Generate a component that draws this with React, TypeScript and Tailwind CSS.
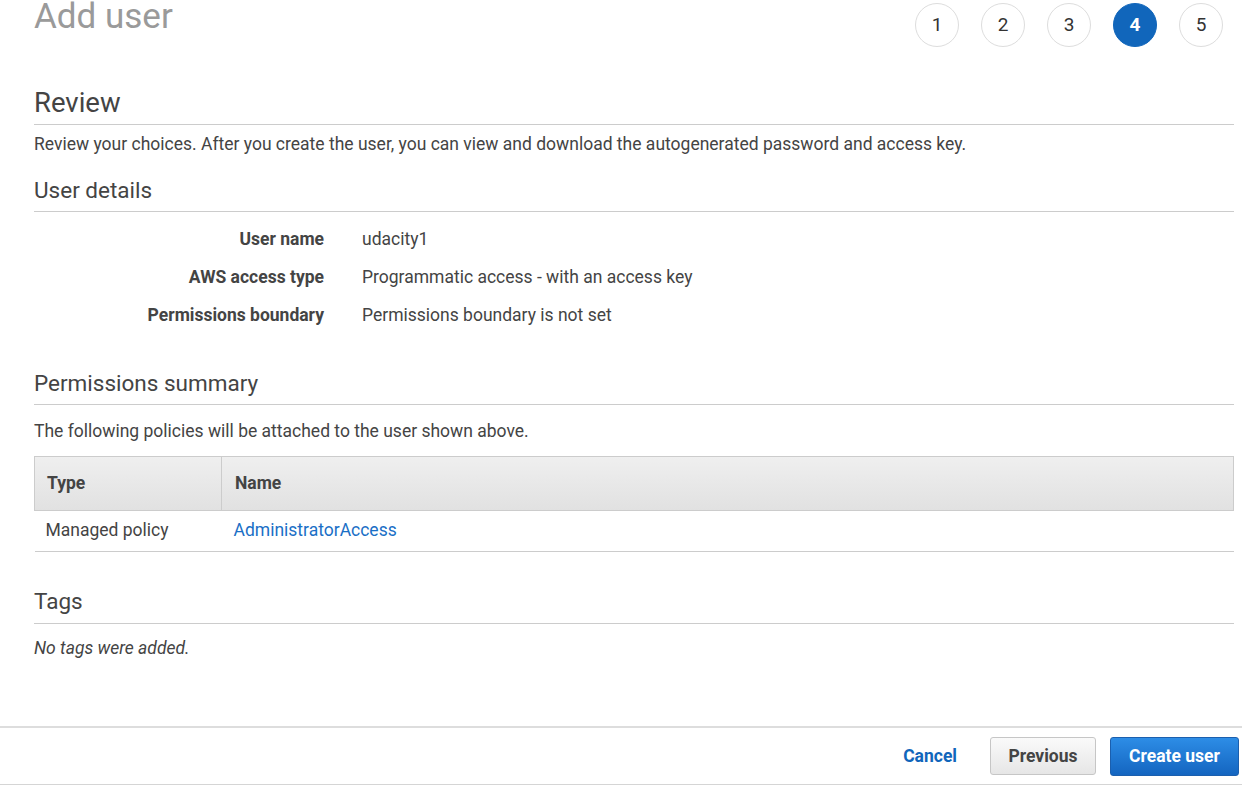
import React from "react";

const steps = [1, 2, 3, 4, 5];

function SectionHeading({ children, mt, pb }: { children: React.ReactNode; mt: string; pb: string }) {
  return (
    <h3 className={`${mt} ${pb} text-[22.5px] leading-[28px] font-normal text-[#444] border-b border-[#cccccc]`}>
      {children}
    </h3>
  );
}

export default function App() {
  return (
    <div
      className="w-[1242px] h-[785px] bg-white overflow-hidden flex flex-col text-[#444]"
      style={{ fontFamily: "Roboto, 'Liberation Sans', Arial, sans-serif" }}
    >
      <div className="pl-[34px] pr-[8px]">
        {/* Header */}
        <div className="h-[48px] flex items-start justify-between">
          <h1 className="text-[35px] leading-[36px] font-normal text-[#9a9a9a] mt-[-1px]">Add user</h1>
          <div className="flex gap-[22px] pt-[3px] pr-[11px]">
            {steps.map((s) =>
              s === 4 ? (
                <div
                  key={s}
                  className="w-[44px] h-[44px] rounded-full bg-[#1166bb] border border-[#1166bb] flex items-center justify-center text-white text-[19px] font-bold"
                >
                  {s}
                </div>
              ) : (
                <div
                  key={s}
                  className="w-[44px] h-[44px] rounded-full bg-white border border-[#dddddd] flex items-center justify-center text-[#333] text-[19px]"
                >
                  {s}
                </div>
              )
            )}
          </div>
        </div>

        {/* Review */}
        <h2 className="mt-[40px] pb-[6px] text-[27.5px] leading-[30px] font-normal text-[#444] border-b border-[#cccccc]">
          Review
        </h2>
        <p className="mt-[7px] text-[17.5px] leading-[24px]">
          Review your choices. After you create the user, you can view and download the autogenerated password and access key.
        </p>

        <SectionHeading mt="mt-[20px]" pb="pb-[7px]">User details</SectionHeading>
        <div className="mt-[15px] flex flex-col gap-[14px] text-[17.5px] leading-[24px]">
          {[
            ["User name", "udacity1"],
            ["AWS access type", "Programmatic access - with an access key"],
            ["Permissions boundary", "Permissions boundary is not set"],
          ].map(([k, v]) => (
            <div key={k} className="flex">
              <div className="w-[290px] text-right font-bold">{k}</div>
              <div className="ml-[38px]">{v}</div>
            </div>
          ))}
        </div>

        <SectionHeading mt="mt-[42px]" pb="pb-[7px]">Permissions summary</SectionHeading>
        <p className="mt-[14px] text-[17.5px] leading-[24px]">The following policies will be attached to the user shown above.</p>

        <table className="mt-[13px] w-full border-collapse text-[17.5px]">
          <thead>
            <tr className="bg-gradient-to-b from-[#efefef] to-[#e1e1e1]">
              <th className="w-[187px] h-[54px] border border-[#cccccc] text-left font-bold pl-[12px]">Type</th>
              <th className="h-[54px] border border-[#cccccc] text-left font-bold pl-[13px]">Name</th>
            </tr>
          </thead>
          <tbody>
            <tr className="border-b border-[#cccccc]">
              <td className="h-[41px] pl-[11px] pb-[2px]">Managed policy</td>
              <td className="h-[41px] pl-[12px] pb-[2px] text-[#1a6fc6]">AdministratorAccess</td>
            </tr>
          </tbody>
        </table>

        <SectionHeading mt="mt-[35px]" pb="pb-[8px]">Tags</SectionHeading>
        <p className="mt-[12px] text-[17.5px] leading-[24px] italic">No tags were added.</p>
      </div>

      {/* Footer */}
      <div className="mt-[66px] h-[59px] border-t-2 border-b border-t-[#dddddd] border-b-[#d5d5d5] flex items-center justify-end pr-[3px]">
        <button className="text-[#1166bb] text-[17.5px] font-bold mr-[33px]">Cancel</button>
        <button className="h-[38px] w-[106px] rounded-[3px] border border-[#c6c6c6] bg-gradient-to-b from-[#fafafa] to-[#e6e6e6] text-[#444] text-[17.5px] font-bold mr-[14px]">
          Previous
        </button>
        <button className="h-[39px] w-[129px] rounded-[3px] border border-[#1b5fae] bg-gradient-to-b from-[#2d8de6] to-[#1465c0] text-white text-[17.5px] font-bold">
          Create user
        </button>
      </div>
    </div>
  );
}
